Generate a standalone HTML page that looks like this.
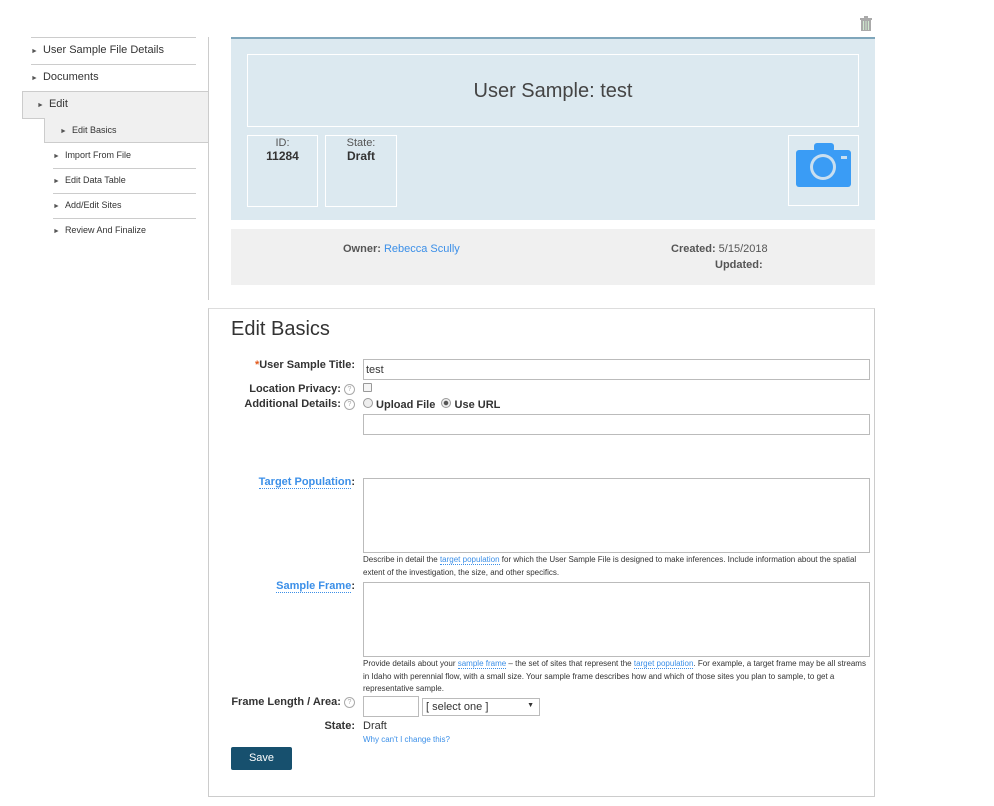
<!DOCTYPE html><html><head><style>
body{margin:0;width:994px;height:806px;position:relative;font-family:"Liberation Sans",sans-serif;color:#333;background:#fff;overflow:hidden}
.a{position:absolute}
.nav{position:absolute;font-size:11px;color:#333}
.nav i{font-style:normal;font-size:7px;color:#555;margin-right:5px}
.lbl{position:absolute;right:639px;font-size:11px;font-weight:bold;color:#333;text-align:right;white-space:nowrap}
.inp{position:absolute;border:1px solid #bbb;background:#fff;box-sizing:border-box}
.help{display:inline-block;width:9px;height:9px;border:1px solid #aaa;border-radius:50%;font-size:7px;line-height:9px;text-align:center;color:#aaa;font-weight:normal;vertical-align:1px}
.rad{display:inline-block;width:8px;height:8px;border:1px solid #999;border-radius:50%;background:#eee;vertical-align:0;box-sizing:content-box}
a{color:#3b8fe8;text-decoration:none}
.dl{border-bottom:1px dotted #3b8fe8}
.small{font-size:8px;color:#333;line-height:12.5px}
</style></head><body>
<!-- sidebar -->
<div class="a" style="left:208px;top:37px;width:1px;height:263px;background:#ccc"></div>
<div class="a" style="left:31px;top:37px;width:165px;height:1px;background:#ccc"></div>
<div class="nav" style="left:31px;top:44px"><i>►</i>User Sample File Details</div>
<div class="a" style="left:31px;top:64px;width:165px;height:1px;background:#ccc"></div>
<div class="nav" style="left:31px;top:71px"><i>►</i>Documents</div>
<div class="a" style="left:22px;top:91px;width:185px;height:26px;background:#f0f0f0;border:1px solid #ccc;border-right:none"></div>
<div class="nav" style="left:37px;top:98px"><i>►</i>Edit</div>
<div class="a" style="left:44px;top:118px;width:163px;height:24px;background:#f0f0f0;border-left:1px solid #ccc;border-bottom:1px solid #ccc"></div>
<div class="nav" style="left:60px;top:125px;font-size:9px"><i>►</i>Edit Basics</div>
<div class="nav" style="left:53px;top:150px;font-size:9px"><i>►</i>Import From File</div>
<div class="a" style="left:53px;top:168px;width:143px;height:1px;background:#ccc"></div>
<div class="nav" style="left:53px;top:175px;font-size:9px"><i>►</i>Edit Data Table</div>
<div class="a" style="left:53px;top:193px;width:143px;height:1px;background:#ccc"></div>
<div class="nav" style="left:53px;top:200px;font-size:9px"><i>►</i>Add/Edit Sites</div>
<div class="a" style="left:53px;top:218px;width:143px;height:1px;background:#ccc"></div>
<div class="nav" style="left:53px;top:225px;font-size:9px"><i>►</i>Review And Finalize</div>
<!-- trash -->
<svg class="a" style="left:859px;top:16px" width="14" height="15" viewBox="0 0 14 15"><rect x="1" y="2" width="12" height="2" fill="#aaa"/><rect x="5" y="0" width="4" height="2" fill="#aaa"/><rect x="2" y="4" width="10" height="11" fill="#aaa"/><rect x="4" y="5" width="1" height="9" fill="#cfe8cf"/><rect x="6.5" y="5" width="1" height="9" fill="#cfe8cf"/><rect x="9" y="5" width="1" height="9" fill="#cfe8cf"/></svg>
<!-- header -->
<div class="a" style="left:231px;top:37px;width:644px;height:183px;background:#dce9f0;border-top:2px solid #7fa6bb;box-sizing:border-box"></div>
<div class="a" style="left:247px;top:54px;width:610px;height:71px;border:1px solid #fff;text-align:center;line-height:73px;font-size:20px;color:#444">User Sample: test</div>
<div class="a" style="left:247px;top:135px;width:69px;height:69px;border:1px solid #fff;text-align:center;font-size:11px;padding-top:1px"><div style="color:#555">ID:</div><div style="font-weight:bold;font-size:12px">11284</div></div>
<div class="a" style="left:325px;top:135px;width:70px;height:69px;border:1px solid #fff;text-align:center;font-size:11px;padding-top:1px"><div style="color:#555">State:</div><div style="font-weight:bold;font-size:12px">Draft</div></div>
<div class="a" style="left:788px;top:135px;width:69px;height:69px;border:1px solid #fff"></div>
<svg class="a" style="left:796px;top:143px" width="55" height="45" viewBox="0 0 55 45"><rect x="0" y="7" width="55" height="37" rx="3" fill="#3a9cf5"/><rect x="18" y="0" width="20" height="9" rx="3" fill="#3a9cf5"/><circle cx="27" cy="24" r="13" fill="#c9dff0"/><circle cx="27" cy="24" r="10" fill="#3a9cf5"/><rect x="45" y="13" width="6" height="3" fill="#c9dff0"/></svg>
<div class="a" style="left:231px;top:229px;width:644px;height:56px;background:#f0f0f0"></div>
<div class="a" style="left:343px;top:243px;font-size:11px;font-weight:bold;color:#555">Owner: <a style="font-weight:normal">Rebecca Scully</a></div>
<div class="a" style="left:671px;top:243px;font-size:11px;color:#555"><b>Created:</b> 5/15/2018</div>
<div class="a" style="left:715px;top:259px;font-size:11px;color:#555"><b>Updated:</b></div>
<!-- form -->
<div class="a" style="left:208px;top:308px;width:667px;height:489px;border:1px solid #ccc;border-top:1px solid #ddd;box-sizing:border-box"></div>
<div class="a" style="left:231px;top:318px;font-size:20px;color:#333">Edit Basics</div>
<div class="lbl" style="top:359px"><span style="color:#e25a1c">*</span>User Sample Title:</div>
<div class="inp" style="left:363px;top:359px;width:507px;height:21px;font-size:11px;padding:4px 2px">test</div>
<div class="lbl" style="top:383px">Location Privacy: <span class="help">?</span></div>
<div class="inp" style="left:363px;top:383px;width:9px;height:9px;border-color:#999;background:#f5f5f5;border-radius:1px"></div>
<div class="lbl" style="top:398px">Additional Details: <span class="help">?</span></div>
<div class="a" style="left:363px;top:398px;font-size:11px;font-weight:bold;white-space:nowrap"><span class="rad"></span> Upload File &nbsp;<span class="rad" style="background:radial-gradient(#555 35%,#eee 45%)"></span> Use URL</div>
<div class="inp" style="left:363px;top:414px;width:507px;height:21px"></div>
<div class="lbl" style="top:476px"><a class="dl">Target Population</a>:</div>
<div class="inp" style="left:363px;top:478px;width:507px;height:75px"></div>
<div class="a small" style="left:363px;top:554px;width:510px">Describe in detail the <a class="dl">target population</a> for which the User Sample File is designed to make inferences. Include information about the spatial extent of the investigation, the size, and other specifics.</div>
<div class="lbl" style="top:580px"><a class="dl">Sample Frame</a>:</div>
<div class="inp" style="left:363px;top:582px;width:507px;height:75px"></div>
<div class="a small" style="left:363px;top:658px;width:510px">Provide details about your <a class="dl">sample frame</a> – the set of sites that represent the <a class="dl">target population</a>. For example, a target frame may be all streams in Idaho with perennial flow, with a small size. Your sample frame describes how and which of those sites you plan to sample, to get a representative sample.</div>
<div class="lbl" style="top:696px">Frame Length / Area: <span class="help">?</span></div>
<div class="inp" style="left:363px;top:696px;width:56px;height:21px"></div>
<div class="inp" style="left:422px;top:698px;width:118px;height:18px;font-size:11px;padding:2px 3px;color:#333">[ select one ]<span style="position:absolute;right:5px;top:3px;font-size:7px">▼</span></div>
<div class="lbl" style="top:720px">State:</div>
<div class="a" style="left:363px;top:720px;font-size:11px">Draft</div>
<div class="a" style="left:363px;top:735px;font-size:8px"><a>Why can't I change this?</a></div>
<div class="a" style="left:231px;top:747px;width:61px;height:23px;background:#17506e;color:#fff;font-size:11px;text-align:center;line-height:23px;border-radius:2px">Save</div>
</body></html>
